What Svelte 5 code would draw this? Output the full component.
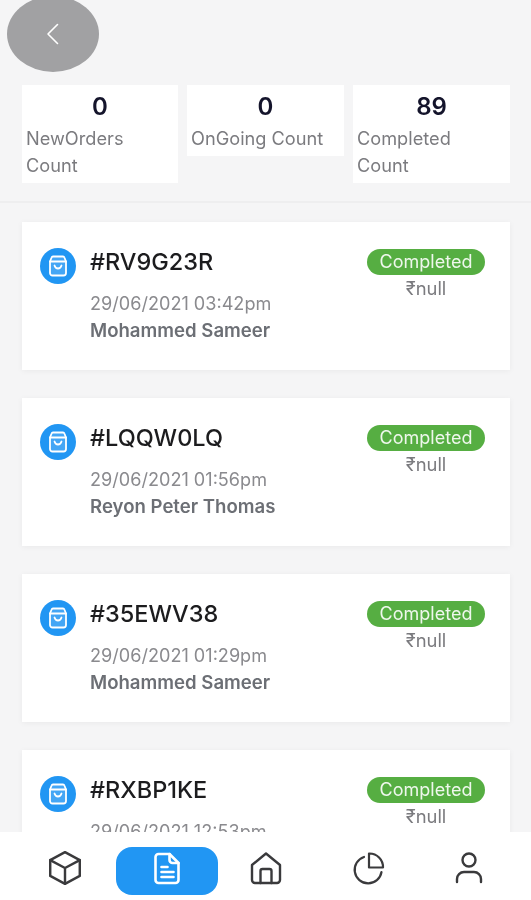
<script>
  const stats = [
    { value: '0', label: 'NewOrders Count' },
    { value: '0', label: 'OnGoing Count' },
    { value: '89', label: 'Completed Count' }
  ];
  const orders = [
    { id: '#RV9G23R', date: '29/06/2021 03:42pm', name: 'Mohammed Sameer' },
    { id: '#LQQW0LQ', date: '29/06/2021 01:56pm', name: 'Reyon Peter Thomas' },
    { id: '#35EWV38', date: '29/06/2021 01:29pm', name: 'Mohammed Sameer' },
    { id: '#RXBP1KE', date: '29/06/2021 12:53pm', name: 'Mohammed Sameer' }
  ];
</script>

<div class="screen">
  <main class="content">
    <header class="top">
      <button class="back" aria-label="Back">
        <svg width="16" height="24" viewBox="0 0 16 24" fill="none" stroke="#fff" stroke-width="1.6" stroke-linecap="round" stroke-linejoin="round">
          <path d="M12.5 2.5 3 12l9.5 9.5" />
        </svg>
      </button>
    </header>

    <section class="stats">
      {#each stats as s}
        <div class="stat">
          <div class="value">{s.value}</div>
          <div class="label">{s.label}</div>
        </div>
      {/each}
    </section>

    <div class="divider"></div>

    <section class="orders">
      {#each orders as o}
        <article class="card">
          <div class="badge">
            <svg width="24" height="24" viewBox="0 0 24 24" fill="rgba(255,255,255,0.16)" stroke="#fff" stroke-width="1.8" stroke-linecap="round" stroke-linejoin="round">
              <path d="M7 2.500h10a1.500 1.500 0 0 1 1.400 1L20 7.500V19a2.500 2.500 0 0 1-2.500 2.500h-11A2.500 2.500 0 0 1 4 19V7.500l1.600-4a1.500 1.500 0 0 1 1.400-1z" />
              <path d="M4 7.500h16" />
              <path d="M8.500 11.500c.6 2 2 3 3.500 3s2.900-1 3.500-3" fill="none" />
            </svg>
          </div>
          <div class="info">
            <div class="id">{o.id}</div>
            <div class="date">{o.date}</div>
            <div class="name">{o.name}</div>
          </div>
          <div class="side">
            <span class="pill">Completed</span>
            <span class="price">₹null</span>
          </div>
        </article>
      {/each}
    </section>
  </main>

  <nav class="nav">
    <div class="item">
      <svg width="38" height="38" viewBox="0 0 36 36" fill="none" stroke="#3a3a3c" stroke-width="2.300" stroke-linejoin="round" stroke-linecap="round">
        <path d="M18 3 32 10.500v15L18 33 4 25.500v-15z" />
        <path d="M4 10.500 18 18l14-7.500M18 18v15" />
      </svg>
    </div>
    <div class="item active">
      <svg width="31" height="36" viewBox="0 0 30 36" fill="none" stroke="#fff" stroke-width="2.600" stroke-linejoin="round" stroke-linecap="round">
        <path d="M6 4h11l9 9v17a3 3 0 0 1-3 3H6a3 3 0 0 1-3-3V7a3 3 0 0 1 3-3z" />
        <path d="M17 4v6a3 3 0 0 0 3 3h6" />
        <path d="M9 17h6M9 22h12M9 27h12" />
      </svg>
    </div>
    <div class="item">
      <svg width="34" height="36" viewBox="0 0 34 36" fill="none" stroke="#3a3a3c" stroke-width="2.400" stroke-linejoin="round" stroke-linecap="round">
        <path d="M3 15 17 3.500 31 15v15a3 3 0 0 1-3 3H6a3 3 0 0 1-3-3z" />
        <path d="M11.500 33V21a2 2 0 0 1 2-2h7a2 2 0 0 1 2 2v12" />
      </svg>
    </div>
    <div class="item">
      <svg width="36" height="36" viewBox="0 0 36 36" fill="none" stroke="#3a3a3c" stroke-width="2.200" stroke-linejoin="round" stroke-linecap="round">
        <path d="M14 7A13.500 13.500 0 1 0 31.500 22" />
        <path d="M19 3.500A13.500 13.500 0 0 1 33 17.500H19z" />
      </svg>
    </div>
    <div class="item">
      <svg width="30" height="36" viewBox="0 0 30 36" fill="none" stroke="#3a3a3c" stroke-width="2.400" stroke-linejoin="round" stroke-linecap="round">
        <circle cx="15" cy="10" r="6.500" />
        <path d="M3 32v-3a7 7 0 0 1 7-7h10a7 7 0 0 1 7 7v3" />
      </svg>
    </div>
  </nav>
</div>

<style>
  :global(body) {
    margin: 0;
    background: #f5f5f6;
  }
  .screen {
    width: 531px;
    height: 900px;
    display: flex;
    flex-direction: column;
    overflow: hidden;
    background: #f5f5f6;
    font-family: Inter, "Liberation Sans", sans-serif;
    filter: blur(0.45px);
  }
  .content {
    flex: 1;
    min-height: 0;
    overflow: hidden;
  }
  .top {
    display: flex;
    align-items: flex-start;
    height: 85px;
    padding-left: 7px;
    box-sizing: border-box;
  }
  .back {
    display: flex;
    align-items: center;
    justify-content: center;
    width: 92px;
    height: 76px;
    margin-top: -4px;
    padding: 0;
    border: 0;
    border-radius: 50%;
    background: #a1a1a3;
  }
  .stats {
    display: grid;
    grid-template-columns: 156px 157px 157px;
    gap: 9px;
    align-items: start;
    padding: 0 21px 0 22px;
  }
  .stat {
    background: #fff;
    padding: 8px 8px 4px 4px;
  }
  .value {
    margin-right: -4px;
    text-align: center;
    font-size: 24px;
    line-height: 28px;
    font-weight: 600;
    color: #14142b;
  }
  .label {
    margin-top: 4px;
    font-size: 18.200px;
    line-height: 27px;
    color: #7b7b7f;
  }
  .divider {
    height: 2px;
    margin-top: 18px;
    background: #eeeeef;
  }
  .orders {
    display: flex;
    flex-direction: column;
    gap: 28px;
    padding: 19px 21px 0 22px;
  }
  .card {
    flex: none;
    height: 148px;
    box-sizing: border-box;
    display: flex;
    align-items: flex-start;
    padding: 26px 25px 0 18px;
    background: #fff;
    box-shadow: 0 1px 6px rgba(0, 0, 0, 0.05);
  }
  .badge {
    flex: none;
    display: flex;
    align-items: center;
    justify-content: center;
    width: 36px;
    height: 36px;
    border-radius: 50%;
    background: #2196f3;
  }
  .info {
    flex: 1;
    margin-left: 14px;
    margin-top: -1px;
  }
  .id {
    font-size: 23.500px;
    line-height: 30px;
    font-weight: 500;
    color: #1c1c1e;
  }
  .date {
    margin-top: 13px;
    font-size: 18.100px;
    line-height: 27px;
    color: #8a8a8e;
  }
  .name {
    font-size: 18.600px;
    line-height: 27px;
    font-weight: 600;
    color: #6c6f75;
  }
  .side {
    display: flex;
    flex-direction: column;
    align-items: center;
    margin-top: 1px;
  }
  .pill {
    width: 118px;
    height: 26px;
    border-radius: 13px;
    background: #56ae42;
    color: #eef7ec;
    font-size: 18px;
    line-height: 26px;
    text-align: center;
  }
  .price {
    margin-top: 1px;
    font-size: 18.400px;
    line-height: 24px;
    color: #7b7b7f;
  }
  .nav {
    flex: none;
    position: relative;
    z-index: 1;
    height: 68px;
    display: grid;
    grid-template-columns: 102px 102px 96px 108px 94px;
    align-items: start;
    background: #fff;
    padding: 15px 0 0 14px;
    box-sizing: border-box;
  }
  .item {
    display: flex;
    align-items: center;
    justify-content: center;
    height: 48px;
    padding-bottom: 6px;
    box-sizing: border-box;
  }
  .item.active {
    border-radius: 16px;
    background: #2196f3;
  }
</style>
